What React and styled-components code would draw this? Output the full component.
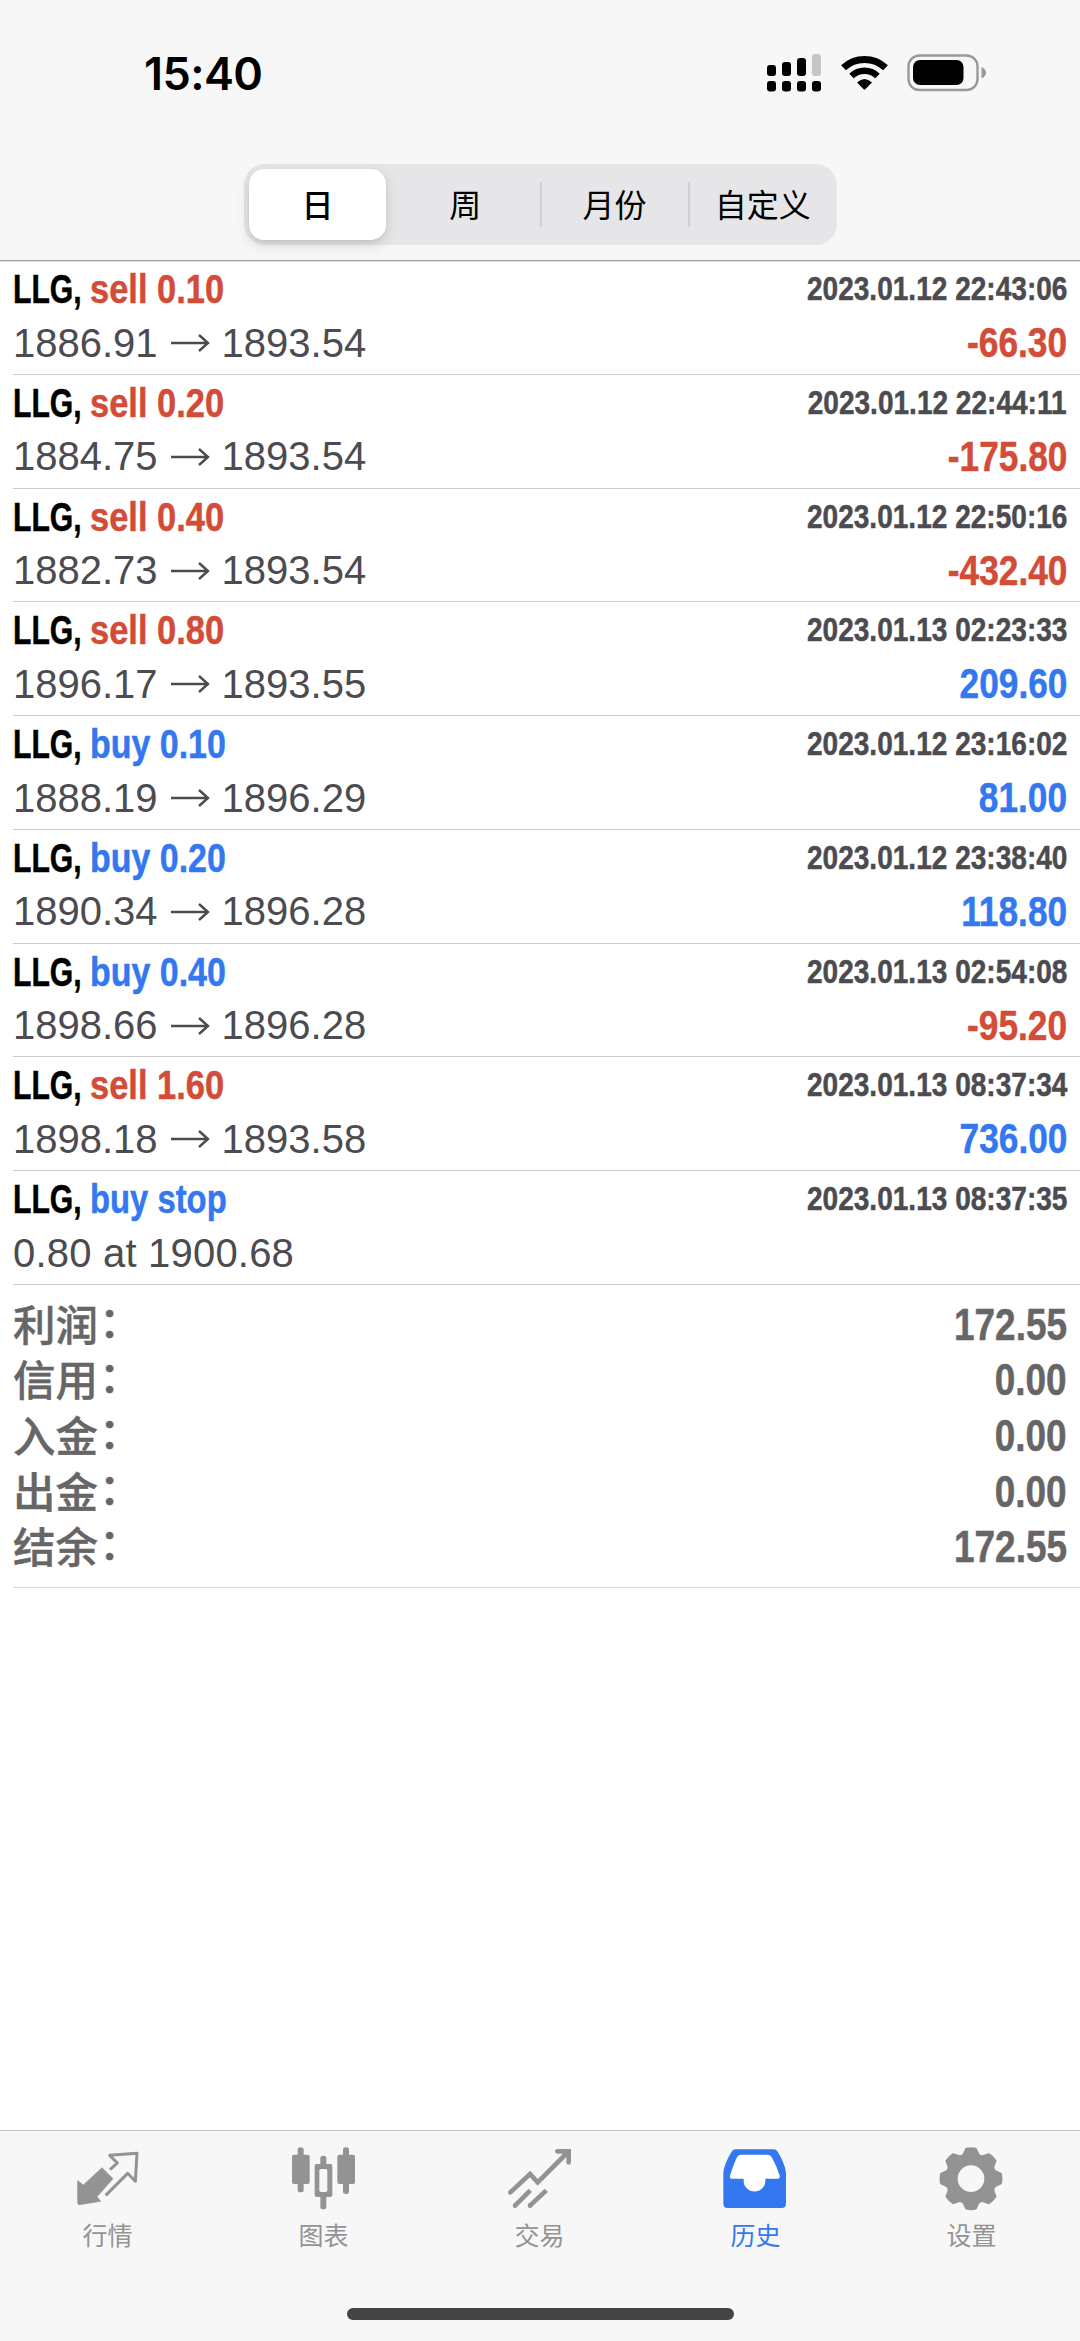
import React from 'react';
import styled, { createGlobalStyle } from 'styled-components';

const BLUE = '#3478f0';
const RED = '#d24c38';
const GREY = '#939393';
const BAR_COLOR = '#f7f7f7';
const DARK_TEXT = '#4b4b50';

const GlobalStyle = createGlobalStyle`
    body {
        margin: 0;
        background-color: #fff;
    }
    * {
        box-sizing: border-box;
    }
`;

const Screen = styled.div`
    display: flex;
    flex-direction: column;
    width: 1080px;
    height: 2341px;
    overflow: hidden;
    background-color: #fff;
    font-family: "Liberation Sans", "Noto Sans CJK SC", sans-serif;
`;

const Header = styled.header`
    height: 261px;
    flex: none;
    background-color: ${BAR_COLOR};
    border-bottom: 1px solid #a2a2a2;
    box-shadow: 0 1px 0 #dedede;
`;

const StatusBar = styled.div`
    display: flex;
    justify-content: space-between;
    height: 164px;
    padding: 46px 94px 0 144px;
`;

const Clock = styled.div`
    font-family: Inter, sans-serif;
    font-size: 45px;
    line-height: 56px;
    font-weight: 600;
    letter-spacing: -0.6px;
    color: #000;
`;

const StatusIcons = styled.svg`
    width: 220px;
    height: 44px;
    margin-top: 4px;
`;

const Segments = styled.div`
    display: grid;
    grid-template-columns: repeat(4, 1fr);
    width: 593px;
    height: 81px;
    margin: 0 0 0 244px;
    border-radius: 21px;
    background-color: #e6e6e8;
`;

const Segment = styled.div`
    display: flex;
    align-items: center;
    justify-content: center;
    margin: ${props => props.$active ? "5px 6px 5px 5px" : "18px 1px 18px -1px"};
    border-left: ${props => props.$divided ? "2px solid #d0d0d2" : "none"};
    border-radius: ${props => props.$active ? "15px" : "0"};
    background-color: ${props => props.$active ? "#fff" : "transparent"};
    box-shadow: ${props => props.$active ? "0 5px 14px rgba(0, 0, 0, .14), 0 1px 3px rgba(0, 0, 0, .06)" : "none"};
    font-family: "Noto Sans CJK SC", sans-serif;
    font-size: 32px;
    line-height: 43px;
    padding-bottom: 2px;
    font-weight: ${props => props.$active ? 500 : 400};
    color: #000;
`;

const DealList = styled.div`
    padding-left: 13px;
`;

const Deal = styled.div`
    height: 113.75px;
    padding: 3px 13px 0 0;
    border-bottom: 1px solid #cdcdcd;
`;

const DealLine = styled.div`
    display: flex;
    justify-content: space-between;
    height: 53px;
    line-height: 53px;
    white-space: pre;
`;

const Condensed = styled.span`
    font-weight: 700;
    -webkit-text-stroke: 0.5px currentColor;
    transform: scaleX(${props => props.$ratio});
    transform-origin: ${props => props.$origin || "right"} center;
`;

const Title = styled.div`
    display: flex;
    margin-top: -1px;
    font-size: 41px;
`;

const Symbol = styled(Condensed)`
    width: 77px;
    color: #000;
`;

const Side = styled(Condensed)`
    color: ${props => props.$color};
`;

const Time = styled(Condensed)`
    font-size: 33px;
    margin-top: -2px;
    color: ${DARK_TEXT};
`;

const Price = styled.span`
    display: flex;
    align-items: center;
    font-size: 40px;
    letter-spacing: ${props => props.$pending ? "0.2px" : "0"};
    margin-top: -1px;
    color: ${DARK_TEXT};
`;

const Arrow = styled.svg`
    width: 40px;
    height: 20px;
    margin: 0 12px 0 12px;
`;

const Profit = styled(Condensed)`
    font-size: 42px;
    margin-top: -1px;
    color: ${props => props.$color};
`;

const Summary = styled.div`
    height: 303px;
    margin-left: 13px;
    padding: 12px 13px 0 0;
    border-bottom: 1px solid #d8d8d8;
`;

const SummaryRow = styled.div`
    display: flex;
    justify-content: space-between;
    height: 55.6px;
    line-height: 55.6px;
    color: #666;
`;

const SummaryLabel = styled.span`
    font-family: "Noto Sans CJK SC", sans-serif;
    font-size: 42.5px;
    font-weight: 500;
    -webkit-text-stroke: 0.4px currentColor;
    margin-top: -2px;
`;

const Colon = styled.span`
    display: inline-block;
    transform: translate(1px, -4px);
`;

const SummaryValue = styled(Condensed)`
    font-size: 43.5px;
    margin-top: 1px;
`;

const TabBar = styled.nav`
    display: grid;
    grid-template-columns: repeat(5, 1fr);
    grid-template-rows: 177px 12px;
    height: 211px;
    margin-top: auto;
    flex: none;
    background-color: ${BAR_COLOR};
    border-top: 1px solid #c8c8c8;
`;

const Tab = styled.div`
    display: flex;
    flex-direction: column;
    align-items: center;
    padding: 9px 1px 0 0;
    color: ${props => props.$active ? BLUE : GREY};
`;

const TabIcon = styled.svg`
    width: 72px;
    height: 72px;
`;

const TabLabel = styled.span`
    margin-top: 4px;
    font-family: "Noto Sans CJK SC", sans-serif;
    font-size: 25px;
    line-height: 36px;
`;

const HomeIndicator = styled.div`
    grid-column: 1 / -1;
    justify-self: center;
    width: 387px;
    height: 12px;
    border-radius: 6px;
    background-color: #444;
`;

const deals = [
    { side: 'sell', volume: '0.10', open: '1886.91', close: '1893.54', time: '2023.01.12 22:43:06', profit: '-66.30' },
    { side: 'sell', volume: '0.20', open: '1884.75', close: '1893.54', time: '2023.01.12 22:44:11', profit: '-175.80' },
    { side: 'sell', volume: '0.40', open: '1882.73', close: '1893.54', time: '2023.01.12 22:50:16', profit: '-432.40' },
    { side: 'sell', volume: '0.80', open: '1896.17', close: '1893.55', time: '2023.01.13 02:23:33', profit: '209.60' },
    { side: 'buy', volume: '0.10', open: '1888.19', close: '1896.29', time: '2023.01.12 23:16:02', profit: '81.00' },
    { side: 'buy', volume: '0.20', open: '1890.34', close: '1896.28', time: '2023.01.12 23:38:40', profit: '118.80' },
    { side: 'buy', volume: '0.40', open: '1898.66', close: '1896.28', time: '2023.01.13 02:54:08', profit: '-95.20' },
    { side: 'sell', volume: '1.60', open: '1898.18', close: '1893.58', time: '2023.01.13 08:37:34', profit: '736.00' },
    { side: 'buy', volume: 'stop', pending: '0.80 at 1900.68', time: '2023.01.13 08:37:35' }
];

const totals = [
    { label: '利润', value: '172.55' },
    { label: '信用', value: '0.00' },
    { label: '入金', value: '0.00' },
    { label: '出金', value: '0.00' },
    { label: '结余', value: '172.55' }
];

const sideRatio = (deal) => {
    if (deal.pending) {
        return 0.8;
    }
    return deal.side === 'sell' ? 0.84 : 0.828;
};

const gearPath = () => {
    const point = (deg, r) => {
        const a = deg * Math.PI / 180;
        return `${(105 + r * Math.sin(a)).toFixed(1)} ${(116 - r * Math.cos(a)).toFixed(1)}`;
    };
    let d = '';
    for (let i = 0; i < 8; i++) {
        const a = i * 45;
        d += `${i ? 'L' : 'M'}${point(a - 17, 76)} L${point(a - 9, 91)} Q${point(a, 93)} ${point(a + 9, 91)} L${point(a + 17, 76)} Q${point(a + 22.5, 72)} ${point(a + 28, 76)} `;
    }
    return d + 'Z';
};

const QuotesIcon = () => (
    <TabIcon viewBox="0 0 216 216">
        <path d="M90 83 L123 116 L75 170 L86 184 L22 194 Q17 194 17 189 V122 L34 135Z" fill="currentColor" stroke="currentColor" strokeWidth="2" strokeLinejoin="round" />
        <path d="M114 89 L136 69 L113 46 L195 40 L190 124 L167 100 L101 166" fill="none" stroke="currentColor" strokeWidth="9" strokeLinejoin="round" />
    </TabIcon>
);

const ChartIcon = () => (
    <TabIcon viewBox="0 0 216 216" fill="currentColor">
        <rect x="29" y="22" width="18" height="135" rx="8" />
        <rect x="12" y="44" width="53" height="88" rx="6" />
        <rect x="97" y="47" width="18" height="161" rx="8" />
        <rect x="80" y="72" width="53" height="99" rx="6" />
        <rect x="94" y="87" width="24" height="69" rx="5" fill={BAR_COLOR} />
        <rect x="165" y="22" width="18" height="140" rx="8" />
        <rect x="148" y="44" width="53" height="88" rx="6" />
    </TabIcon>
);

const TradeIcon = () => (
    <TabIcon viewBox="0 0 216 216" fill="none" stroke="currentColor" strokeWidth="14">
        <path d="M19 157 L78 102 L101 127 L192 36" strokeLinecap="round" />
        <path d="M160 34 H194 V67" strokeLinecap="round" />
        <path d="M33 197 L79 151 M78 197 L127 151" />
        <path d="M33 197h.1 M78 197h.1" strokeLinecap="round" />
    </TabIcon>
);

const HistoryIcon = () => (
    <TabIcon viewBox="0 0 216 216">
        <path d="M47 28 H160 Q169 28 173 35 C188 60 198 82 198 104 V191 Q198 204 185 204 H23 Q10 204 10 191 V104 C10 82 20 60 35 35 Q39 28 47 28Z" fill="currentColor" />
        <path d="M62 44 H143 Q152 44 156 53 Q171 80 179 107 Q180 116 175 116 H136 V122 A32 32 0 0 1 71 122 V116 H36 Q28 116 30 107 Q38 80 50 53 Q54 44 62 44Z" fill="#fff" />
    </TabIcon>
);

const SettingsIcon = () => (
    <TabIcon viewBox="0 0 216 216">
        <path d={gearPath()} fill="currentColor" stroke="currentColor" strokeWidth="6" strokeLinejoin="round" />
        <circle cx="105" cy="116" r="40" fill={BAR_COLOR} />
    </TabIcon>
);

const tabs = [
    { label: '行情', Icon: QuotesIcon },
    { label: '图表', Icon: ChartIcon },
    { label: '交易', Icon: TradeIcon },
    { label: '历史', Icon: HistoryIcon, active: true },
    { label: '设置', Icon: SettingsIcon }
];

const StatusGlyphs = () => (
    <StatusIcons viewBox="766 50 220 44">
        {/* dual sim signal */}
        <rect x="767" y="65" width="9" height="11" rx="3" />
        <rect x="782" y="62" width="9" height="14" rx="3" />
        <rect x="797" y="58" width="9" height="18" rx="3" />
        <rect x="812" y="54" width="9" height="22" rx="3" fill="#c5c5c5" />
        {[767, 782, 797, 812].map(x => <rect key={x} x={x} y="81" width="9" height="10.5" rx="3" />)}
        {/* wifi */}
        <path d="M843.5 67.8 A30.5 30.5 0 0 1 885.5 67.8" fill="none" stroke="#000" strokeWidth="7" />
        <path d="M851.5 76 A19 19 0 0 1 877.5 76" fill="none" stroke="#000" strokeWidth="6.5" />
        <path d="M857 82.5 Q864.5 75.5 872 82.5 L865.3 89.3 Q864.5 90 863.7 89.3Z" />
        {/* battery */}
        <rect x="908.5" y="55.5" width="69" height="34.5" rx="11" fill="none" stroke="#999" strokeWidth="2.4" />
        <rect x="913" y="60" width="50.5" height="25" rx="7" />
        <path d="M981.5 67 Q986 69 986 72.6 Q986 76.5 981.5 78.5Z" fill="#999" />
    </StatusIcons>
);

class App extends React.Component {
    generateDeals = () => {
        return deals.map(deal => (
            <Deal key={deal.time}>
                <DealLine>
                    <Title>
                        <Symbol $ratio={0.735} $origin="left">LLG,</Symbol>
                        <Side $ratio={sideRatio(deal)} $origin="left" $color={deal.side === 'sell' ? RED : BLUE}>
                            {deal.side} {deal.volume}
                        </Side>
                    </Title>
                    <Time $ratio={0.85}>{deal.time}</Time>
                </DealLine>
                <DealLine>
                    {deal.pending ? <Price $pending>{deal.pending}</Price> : (
                        <Price>
                            {deal.open}
                            <Arrow viewBox="0 0 40 20" fill="none" stroke={DARK_TEXT} strokeWidth="2.4">
                                <path d="M1 10 H38 M29 2 L38 10 L29 18" />
                            </Arrow>
                            {deal.close}
                        </Price>
                    )}
                    {deal.profit && <Profit $ratio={0.84} $color={deal.profit[0] === '-' ? RED : BLUE}>{deal.profit}</Profit>}
                </DealLine>
            </Deal>
        ));
    };

    render() {
        return (
            <Screen>
                <GlobalStyle />
                <Header>
                    <StatusBar>
                        <Clock>15:40</Clock>
                        <StatusGlyphs />
                    </StatusBar>
                    <Segments>
                        <Segment $active>日</Segment>
                        <Segment>周</Segment>
                        <Segment $divided>月份</Segment>
                        <Segment $divided>自定义</Segment>
                    </Segments>
                </Header>
                <DealList>{this.generateDeals()}</DealList>
                <Summary>
                    {totals.map(row => (
                        <SummaryRow key={row.label}>
                            <SummaryLabel>{row.label}<Colon>：</Colon></SummaryLabel>
                            <SummaryValue $ratio={0.85}>{row.value}</SummaryValue>
                        </SummaryRow>
                    ))}
                </Summary>
                <TabBar>
                    {tabs.map(({ label, Icon, active }) => (
                        <Tab key={label} $active={active}>
                            <Icon />
                            <TabLabel>{label}</TabLabel>
                        </Tab>
                    ))}
                    <HomeIndicator />
                </TabBar>
            </Screen>
        );
    }
}

export default App;
